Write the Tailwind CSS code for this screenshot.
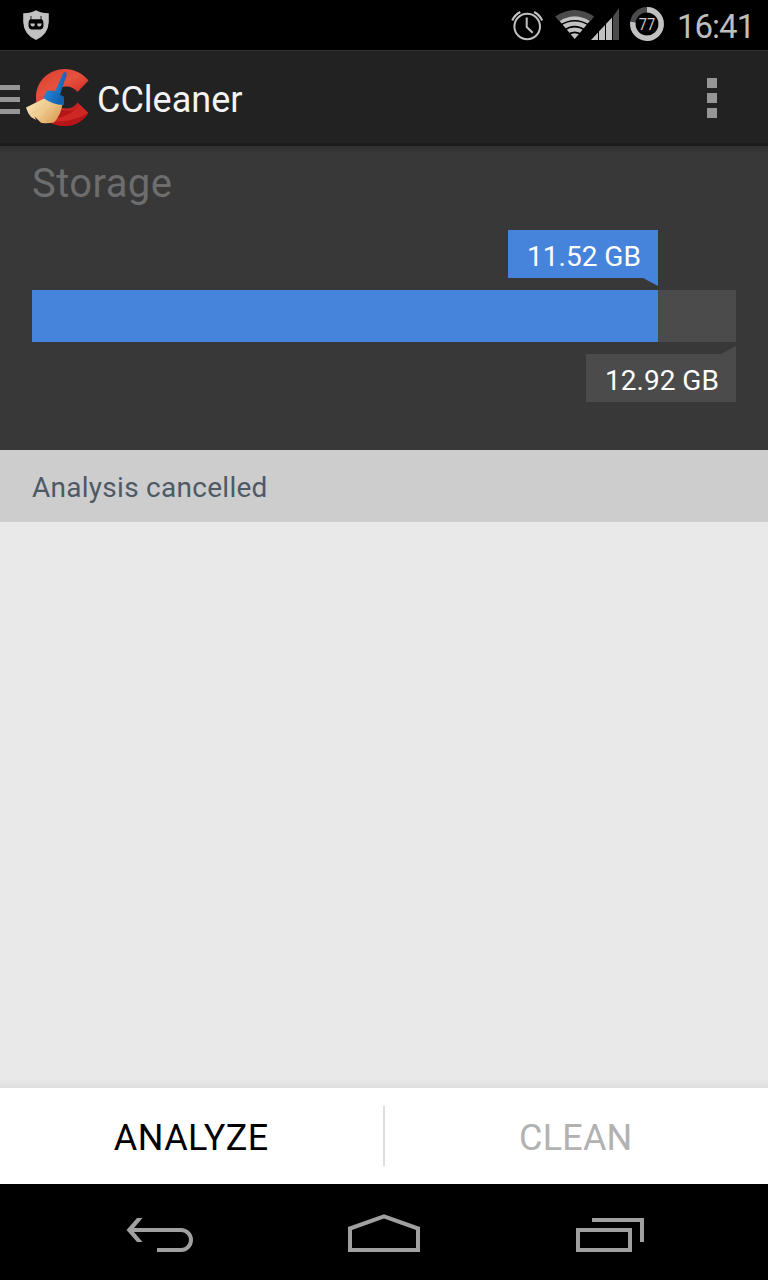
<!DOCTYPE html>
<html lang="en">
<head>
<meta charset="utf-8">
<title>CCleaner</title>
<script src="https://cdn.jsdelivr.net/npm/@tailwindcss/browser@4"></script>
</head>
<body class="bg-black">
<div class="flex h-[1280px] w-[768px] flex-col overflow-hidden bg-[#e9e9e9] font-['Roboto','Noto_Sans',sans-serif] whitespace-nowrap">

  <!-- Status bar -->
  <header class="flex h-[50px] shrink-0 items-start bg-black">
    <svg class="ml-[22px] h-[50px] w-7" viewBox="22 0 28 50">
      <path d="M36 10.3Q41 13.2 48.8 13.3V22Q48.300 34.500 36 40Q23.700 34.500 23.200 22V13.300Q31 13.200 36 10.300Z" fill="#c1c1c1"/>
      <path d="M31 16v4M41 16v4" stroke="#444" stroke-width="1.300"/>
      <path d="M30.500 19.200H41.500Q43.600 19.600 43.500 25Q43.600 29 40.500 29.500H31.500Q28.400 29 28.500 25Q28.400 19.600 30.500 19.200Z" fill="#050505"/>
      <path d="M30.200 23.500H34.700V25.200Q34.300 26.400 32.700 26.400Q30.700 26.300 30.200 23.500ZM41.800 23.500H37.300V25.200Q37.700 26.400 39.300 26.400Q41.300 26.300 41.800 23.500Z" fill="#c1c1c1"/>
    </svg>
    <svg class="ml-auto h-[50px] w-[160px]" viewBox="508 0 160 50" fill="none">
      <g stroke="#c1c1c1">
        <circle cx="527.200" cy="26.500" r="12.800" stroke-width="2"/>
        <path d="M526.700 17.500V27L532.700 32.700" stroke-width="2"/>
        <path d="M512.300 20.500Q514.500 15 520.300 12M542.100 20.500Q539.900 15 534.100 12" stroke-width="2.200"/>
      </g>
      <path d="M555.200 16.500Q574.700 3.300 594.200 16.500L590.500 21Q574.700 11.500 558.900 21Z" fill="#4b4b4b"/>
      <path d="M559.500 21Q574.700 11.700 589.900 21L574.700 39Z" fill="#c1c1c1"/>
      <path d="M560 25.300Q574.700 16.200 589.400 25.300M564 30.300Q574.700 23 585.400 30.300M567 35.300Q574.700 29.300 582.400 35.300" stroke="#000" stroke-width="1.700"/>
      <path d="M591 40L612 17.400V40Z" fill="#c1c1c1"/>
      <path d="M613 16.500L619 8V40H613Z" fill="#4b4b4b"/>
      <path d="M598.500 28V40M605.500 20V40M612.500 12V40" stroke="#000" stroke-width="1"/>
      <circle cx="647" cy="24" r="14.200" stroke="#4b4b4b" stroke-width="5.400"/>
      <path d="M647 9.800A14.200 14.200 0 1 1 632.900 22.200" stroke="#c1c1c1" stroke-width="5.400"/>
      <text x="647" y="30" text-anchor="middle" font-size="17" textLength="16.500" lengthAdjust="spacingAndGlyphs" fill="#c8c8c8">77</text>
    </svg>
    <span class="ml-[9px] w-[91px] pt-[6.5px] text-[33px] leading-[40px] tracking-[-1px] text-[#bebebe]">16:41</span>
  </header>

  <!-- Action bar -->
  <div class="flex h-24 shrink-0 items-start border-t border-b-3 border-t-[#343434] border-b-[#1b1b1b] bg-[#222]">
    <svg class="h-[92px] w-[92px]" viewBox="0 51 92 92">
      <defs>
        <linearGradient id="red" x1="0" y1="0" x2="0.500" y2="1"><stop offset="0" stop-color="#dc3b2c"/><stop offset=".4" stop-color="#e5523e"/><stop offset=".7" stop-color="#d52e26"/><stop offset="1" stop-color="#b61319"/></linearGradient>
        <linearGradient id="straw" x1="0" y1="0" x2="1" y2="0.600"><stop offset="0" stop-color="#fae5bb"/><stop offset=".55" stop-color="#f0cb90"/><stop offset="1" stop-color="#dca25a"/></linearGradient>
        <linearGradient id="blue" x1="0" y1="0" x2="1" y2="0.300"><stop offset="0" stop-color="#2489d9"/><stop offset="1" stop-color="#125fae"/></linearGradient>
      </defs>
      <path d="M0 85h20v5H0zM0 97h20v5H0zM0 109h20v5H0z" fill="#969696"/>
      <path d="M88.500 80.500C82 73 74 69 65 69C49 69 36 81 36 97.500C36 114 49 126 65 126C74 126 82.500 122 88.500 113L77.500 102.500C75 106.500 71 108.500 66 108.500C59 108.500 54.500 104 54.500 97.500C54.500 91 59 86.500 66 86.500C71 86.500 75 88.500 77.500 92Z" fill="url(#red)"/>
      <path d="M60 109C68 112 78 110 88 113.200C82 122 74 126 65 126C56 126 49 123 44 118Z" fill="#b8151b"/>
      <path d="M51 119C62 118 73 114 80 105L88.300 113C78 119 64 123 51 121Z" fill="#cf2824"/>
      <path d="M45 98L26 107.500Q27.500 113 31 117L36 120L34.500 116.500L41 122.800Q47 124 54 122.500Q61 115 62.500 104Z" fill="url(#straw)"/>
      <path d="M46 103Q41 111 31 113M52 105Q48 114 40 120M57 106Q54 115 47 122" stroke="#c89554" stroke-width=".5" fill="none" opacity=".3"/>
      <path d="M62.600 74Q64 71 66 72.500Q67.200 73.500 66.200 76.500L60 94.500L54.800 92.500Z" fill="url(#blue)"/>
      <path d="M47 90.500Q54 90.300 57 92Q60 95 64 96.700V105Q54 105.500 43.300 98Z" fill="url(#blue)"/>
    </svg>
    <h1 class="ml-[5px] pt-[25px] text-[36px] leading-[48px] text-[#f3f3f3]">CCleaner</h1>
    <div class="mt-[27px] mr-[51px] ml-auto flex flex-col gap-[5px]">
      <i class="size-[10px] bg-[#969696]"></i><i class="size-[10px] bg-[#969696]"></i><i class="size-[10px] bg-[#969696]"></i>
    </div>
  </div>

  <!-- Storage usage -->
  <section class="flex h-[304px] shrink-0 flex-col bg-[#383838] bg-linear-to-b from-[#303030] to-[#383838] to-[8px] px-8">
    <h2 class="h-[84px] pt-[14px] text-[40px] leading-[48px] tracking-[0.4px] text-[#6d6d6d]">Storage</h2>
    <div class="ml-[476px] h-[60px] w-[150px] bg-[#4684dc] pt-[3px] pl-[2px] text-center text-[28px] leading-[48px] text-white [clip-path:polygon(0_0,100%_0,100%_56px,135px_48px,0_48px)]">11.52 GB</div>
    <div class="flex h-[52px] bg-[#4b4b4b]"><div class="w-[626px] bg-[#4684dc]"></div></div>
    <div class="mt-1 ml-auto h-[56px] w-[150px] bg-[#4b4b4b] pt-[11px] pl-[2px] text-center text-[28px] leading-[48px] text-white [clip-path:polygon(0_8px,135px_8px,100%_0,100%_100%,0_100%)]">12.92 GB</div>
  </section>

  <div class="h-[72px] shrink-0 bg-[#cdcdcd] px-8 pt-[2px] text-[28px] leading-[72px] tracking-[0.27px] text-[#4e5966]">Analysis cancelled</div>

  <main class="flex grow flex-col justify-end"><div class="h-[10px] bg-linear-to-b from-[#e9e9e9] to-[#dfdfdf]"></div></main>

  <!-- Actions -->
  <div class="flex h-24 shrink-0 items-center bg-white text-center text-[36px] leading-[96px]">
    <button class="h-24 flex-1 pt-[2px] tracking-[0.45px] text-black">ANALYZE</button>
    <div class="h-[60px] w-[2px] bg-[#dedede]"></div>
    <button class="h-24 flex-1 pt-[2px] pr-[1px] tracking-[0.2px] text-[#b2b2b2]">CLEAN</button>
  </div>

  <!-- Navigation bar -->
  <nav class="h-24 shrink-0 bg-black">
    <svg class="h-24 w-[768px]" viewBox="0 1184 768 96" fill="none" stroke="#a0a0a0" stroke-width="4">
      <path d="M129 1230H181A9.800 9.800 0 0 1 181 1250H157"/>
      <path d="M142.500 1218H137L126.500 1230L137 1242H142.500L132.300 1230Z" fill="#a0a0a0" stroke="none"/>
      <path d="M350 1228.500L384 1216.400L418 1228.500V1250H350Z"/>
      <path d="M578 1230H630V1250H578ZM592 1220H642V1242"/>
    </svg>
  </nav>
</div>
</body>
</html>
